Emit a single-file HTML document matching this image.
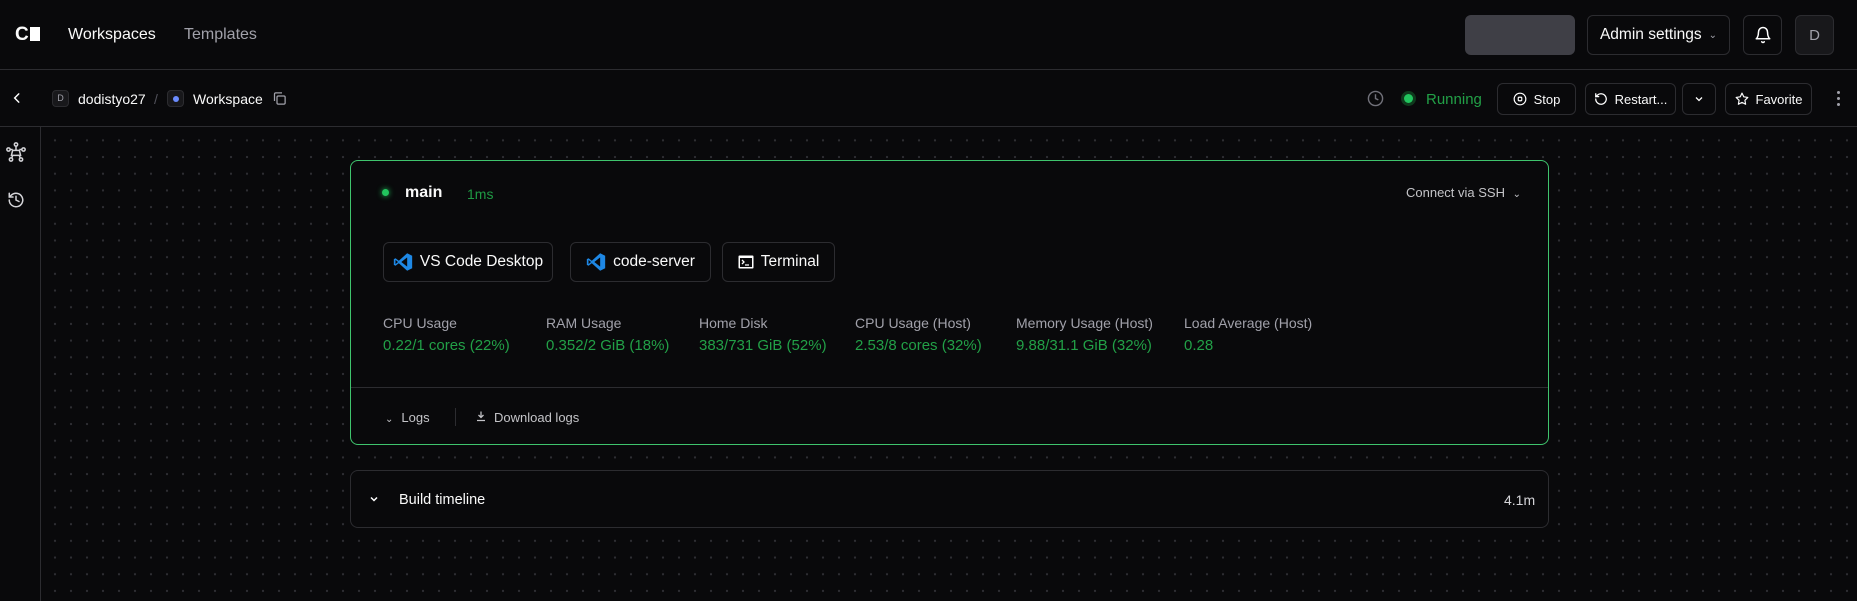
<!DOCTYPE html>
<html><head><meta charset="utf-8"><style>
*{box-sizing:border-box;margin:0;padding:0}
body{width:1857px;height:601px;background:#09090b;color:#fafafa;font-family:"Liberation Sans",sans-serif;position:relative;overflow:hidden}
.a{position:absolute}
.btn{position:absolute;border:1px solid #2c2c30;border-radius:6px;display:flex;align-items:center;justify-content:center;gap:7px;font-size:14px;color:#fafafa}
.lbl{position:absolute;font-size:14px;color:#a1a1aa}
.val{position:absolute;font-size:15px;color:#22a047}
svg{display:block}
</style></head><body>
<div class="a" style="left:41px;top:128px;width:1816px;height:473px;background-image:radial-gradient(circle,#2e2e33 1px,transparent 1.3px);background-size:16px 16.7px;background-position:6px 4px"></div>
<div class="a" style="left:0;top:0;width:1857px;height:70px;border-bottom:1px solid #2c2c30;background:#09090b"></div>
<div class="a" style="left:15px;top:27px;font-weight:bold;font-size:19px;letter-spacing:-1px;line-height:16px">C<span style="display:inline-block;width:10px;height:14px;background:#fff;margin-left:2px;vertical-align:-1px"></span></div>
<div class="a" style="left:68px;top:26px;font-size:16px">Workspaces</div>
<div class="a" style="left:184px;top:26px;font-size:16px;color:#a1a1aa">Templates</div>
<div class="a" style="left:1465px;top:15px;width:110px;height:40px;background:#3f3f46;border-radius:6px"></div>
<div class="btn" style="left:1587px;top:15px;width:143px;height:40px;font-size:15.5px">Admin settings <span style="font-size:10px;color:#a1a1aa">&#8964;</span></div>
<div class="btn" style="left:1743px;top:15px;width:39px;height:40px"><svg width="18" height="18" viewBox="0 0 24 24" fill="none" stroke="#fff" stroke-width="2" stroke-linecap="round" stroke-linejoin="round"><path d="M6 8a6 6 0 0 1 12 0c0 7 3 9 3 9H3s3-2 3-9"/><path d="M10.3 21a1.94 1.94 0 0 0 3.4 0"/></svg></div>
<div class="btn" style="left:1795px;top:15px;width:39px;height:40px;background:#18181b;color:#a1a1aa;font-size:15px">D</div>
<div class="a" style="left:0;top:70px;width:1857px;height:57px;border-bottom:1px solid #2c2c30;background:#09090b"></div>
<svg class="a" style="left:10px;top:91px" width="14" height="14" viewBox="0 0 24 24" fill="none" stroke="#fff" stroke-width="2.5" stroke-linecap="round"><path d="M15 5l-7 7 7 7"/></svg>
<div class="a" style="left:52px;top:90px;width:17px;height:17px;border:1px solid #2c2c30;border-radius:4px;background:#18181b;font-size:9px;color:#a1a1aa;text-align:center;line-height:15px">D</div>
<div class="a" style="left:78px;top:91px;font-size:14px">dodistyo27</div>
<div class="a" style="left:154px;top:91px;font-size:14px;color:#52525b">/</div>
<div class="a" style="left:167px;top:90px;width:17px;height:17px;border:1px solid #2c2c30;border-radius:4px;background:#18181b"><div style="width:6px;height:6px;border-radius:50%;background:#6b8cff;margin:4.5px"></div></div>
<div class="a" style="left:193px;top:91px;font-size:14px">Workspace</div>
<svg class="a" style="left:272px;top:91px" width="15" height="15" viewBox="0 0 24 24" fill="none" stroke="#a1a1aa" stroke-width="2"><rect x="8" y="8" width="13" height="13" rx="2"/><path d="M4 16V5a2 2 0 0 1 2-2h10"/></svg>
<svg class="a" style="left:1367px;top:90px" width="17" height="17" viewBox="0 0 24 24" fill="none" stroke="#71717a" stroke-width="2"><circle cx="12" cy="12" r="10"/><path d="M12 6v6l4 2"/></svg>
<div class="a" style="left:1401px;top:91px;width:15px;height:15px;border-radius:50%;background:#0f3a1d"><div style="width:9px;height:9px;border-radius:50%;background:#22c55e;margin:3px"></div></div>
<div class="a" style="left:1426px;top:91px;font-size:15px;color:#22a047">Running</div>
<div class="btn" style="left:1497px;top:83px;width:79px;height:32px;font-size:13px"><svg width="14" height="14" viewBox="0 0 24 24" fill="none" stroke="#fff" stroke-width="2"><circle cx="12" cy="12" r="10"/><rect x="9" y="9" width="6" height="6" rx="1"/></svg>Stop</div>
<div class="btn" style="left:1585px;top:83px;width:91px;height:32px;font-size:13px"><svg width="14" height="14" viewBox="0 0 24 24" fill="none" stroke="#fff" stroke-width="2.2" stroke-linecap="round"><path d="M3 12a9 9 0 1 0 3-6.7L3 8"/><path d="M3 3v5h5"/></svg>Restart...</div>
<div class="btn" style="left:1682px;top:83px;width:34px;height:32px"><svg width="12" height="12" viewBox="0 0 24 24" fill="none" stroke="#fff" stroke-width="2.5"><path d="M6 9l6 6 6-6"/></svg></div>
<div class="btn" style="left:1725px;top:83px;width:87px;height:32px;font-size:13px"><svg width="14" height="14" viewBox="0 0 24 24" fill="none" stroke="#fff" stroke-width="2" stroke-linejoin="round"><path d="M12 2l3.1 6.3 6.9 1-5 4.9 1.2 6.8L12 17.8 5.8 21l1.2-6.8-5-4.9 6.9-1z"/></svg>Favorite</div>
<div class="a" style="left:1837px;top:91px;width:4px"><div style="width:3px;height:3px;border-radius:50%;background:#a1a1aa;margin-bottom:3px"></div><div style="width:3px;height:3px;border-radius:50%;background:#a1a1aa;margin-bottom:3px"></div><div style="width:3px;height:3px;border-radius:50%;background:#a1a1aa"></div></div>
<div class="a" style="left:40px;top:127px;width:1px;height:474px;background:#2c2c30"></div>
<svg class="a" style="left:6px;top:142px" width="20" height="20" viewBox="0 0 24 24" fill="none" stroke="#d4d4d8" stroke-width="1.8"><circle cx="12" cy="3" r="2"/><circle cx="3" cy="9" r="2"/><circle cx="21" cy="9" r="2"/><circle cx="6" cy="21" r="2"/><circle cx="18" cy="21" r="2"/><path d="M8 10h8l1.5 6h-11z"/><path d="M12 5v5M5 9h3M16 9h3M7 19l1-3M17 19l-1-3"/></svg>
<svg class="a" style="left:7px;top:191px" width="18" height="18" viewBox="0 0 24 24" fill="none" stroke="#d4d4d8" stroke-width="2" stroke-linecap="round"><path d="M3 12a9 9 0 1 0 3-6.7L3 8"/><path d="M3 3v5h5"/><path d="M12 7v5l4 2"/></svg>
<div class="a" style="left:350px;top:160px;width:1199px;height:285px;border:1px solid #3fc46d;border-radius:8px;background:#09090b"></div>
<div class="a" style="left:382px;top:189px;width:7px;height:7px;border-radius:50%;background:#22c55e;box-shadow:0 0 6px #22c55e"></div>
<div class="a" style="left:405px;top:184px;font-size:16px;font-weight:bold">main</div>
<div class="a" style="left:467px;top:186px;font-size:14px;color:#1f9a44">1ms</div>
<div class="a" style="left:1406px;top:185px;font-size:13px;color:#c4c4c8">Connect via SSH <span style="font-size:10px;margin-left:4px">&#8964;</span></div>
<div class="btn" style="left:383px;top:242px;width:170px;height:40px;font-size:15.5px"><svg width="20" height="20" viewBox="0 0 24 24"><path d="M17 1.5L23 4.5V19.5L17 22.5 7 13.5 3 16.5 1 15.5V8.5L3 7.5 7 10.5z" fill="#1e88e5"/><path d="M17 6.5v11L10 12z M3 9.5v5L6 12z" fill="#09090b"/></svg>VS Code Desktop</div>
<div class="btn" style="left:570px;top:242px;width:141px;height:40px;font-size:15.5px"><svg width="20" height="20" viewBox="0 0 24 24"><path d="M17 1.5L23 4.5V19.5L17 22.5 7 13.5 3 16.5 1 15.5V8.5L3 7.5 7 10.5z" fill="#1e88e5"/><path d="M17 6.5v11L10 12z M3 9.5v5L6 12z" fill="#09090b"/></svg>code-server</div>
<div class="btn" style="left:722px;top:242px;width:113px;height:40px;font-size:15.5px"><svg width="16" height="14" viewBox="0 0 16 14"><rect x="0.5" y="0.5" width="15" height="13" rx="1" fill="#fff"/><rect x="2" y="3" width="12" height="9" fill="#09090b"/><path d="M4 5l2 2-2 2M7 10h4" stroke="#fff" stroke-width="1.3" fill="none"/></svg>Terminal</div>
<div class="lbl" style="left:383px;top:315px">CPU Usage</div><div class="val" style="left:383px;top:337px">0.22/1 cores (22%)</div>
<div class="lbl" style="left:546px;top:315px">RAM Usage</div><div class="val" style="left:546px;top:337px">0.352/2 GiB (18%)</div>
<div class="lbl" style="left:699px;top:315px">Home Disk</div><div class="val" style="left:699px;top:337px">383/731 GiB (52%)</div>
<div class="lbl" style="left:855px;top:315px">CPU Usage (Host)</div><div class="val" style="left:855px;top:337px">2.53/8 cores (32%)</div>
<div class="lbl" style="left:1016px;top:315px">Memory Usage (Host)</div><div class="val" style="left:1016px;top:337px">9.88/31.1 GiB (32%)</div>
<div class="lbl" style="left:1184px;top:315px">Load Average (Host)</div><div class="val" style="left:1184px;top:337px">0.28</div>
<div class="a" style="left:351px;top:387px;width:1197px;height:1px;background:#2c2c30"></div>
<div class="a" style="left:385px;top:410px;font-size:13px;color:#c4c4c8"><span style="font-size:10px;margin-right:8px">&#8964;</span>Logs</div>
<div class="a" style="left:455px;top:408px;width:1px;height:18px;background:#2c2c30"></div>
<svg class="a" style="left:475px;top:410px" width="12" height="12" viewBox="0 0 24 24" fill="none" stroke="#c4c4c8" stroke-width="2.5"><path d="M12 3v12M7 10l5 5 5-5M4 21h16"/></svg>
<div class="a" style="left:494px;top:410px;font-size:13px;color:#c4c4c8">Download logs</div>
<div class="a" style="left:350px;top:470px;width:1199px;height:58px;border:1px solid #2c2c30;border-radius:8px;background:#09090b"></div>
<svg class="a" style="left:368px;top:493px" width="12" height="12" viewBox="0 0 24 24" fill="none" stroke="#fff" stroke-width="3"><path d="M6 9l6 6 6-6"/></svg>
<div class="a" style="left:399px;top:492px;font-size:14.5px">Build timeline</div>
<div class="a" style="left:1504px;top:492px;font-size:14px;color:#d4d4d8">4.1m</div>
</body></html>
